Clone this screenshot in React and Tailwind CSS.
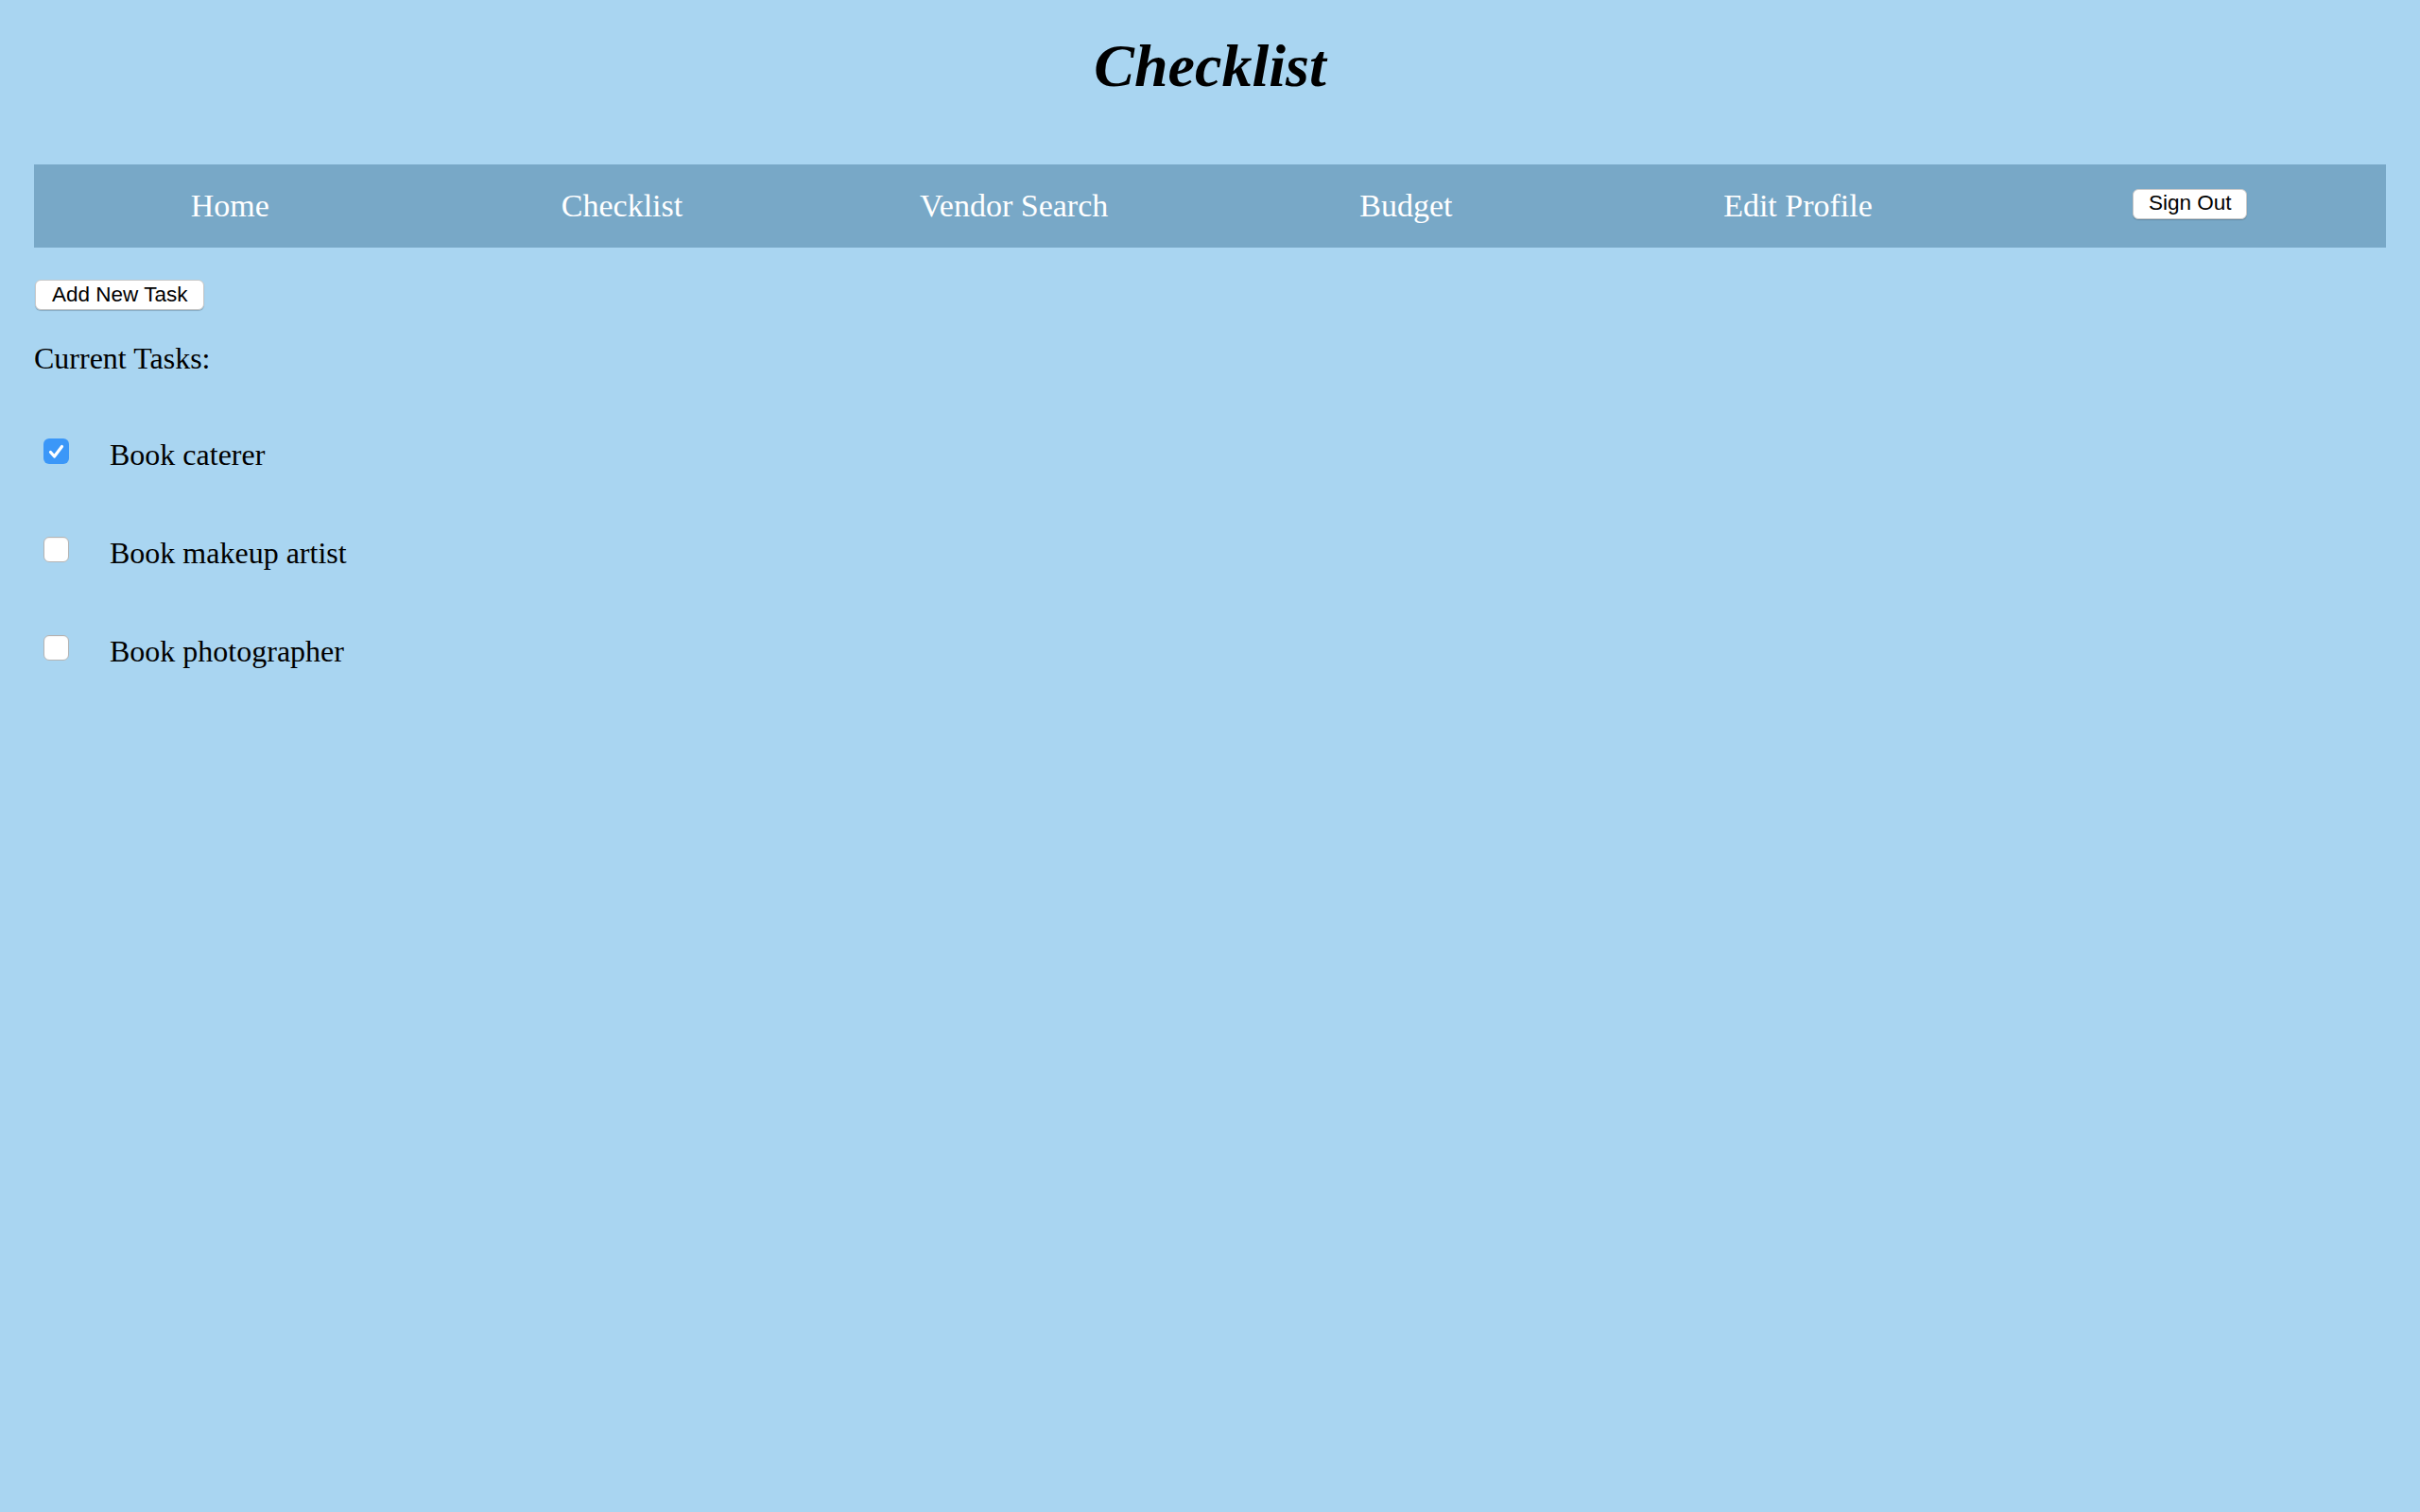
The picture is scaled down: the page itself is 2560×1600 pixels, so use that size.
import React from "react";

const serif = { fontFamily: '"Liberation Serif", "Times New Roman", serif' };
const sans = { fontFamily: '"Liberation Sans", Arial, Helvetica, sans-serif' };

function Box({ checked }) {
  if (checked) {
    return (
      <div className="w-[27px] h-[27px] rounded-[6px] bg-[#3b97f8] flex items-center justify-center shrink-0">
        <svg width="27" height="27" viewBox="0 0 27 27">
          <polyline
            points="7.5,14.5 11.5,19 19.5,8.5"
            fill="none"
            stroke="white"
            strokeWidth="3.2"
            strokeLinecap="round"
            strokeLinejoin="round"
          />
        </svg>
      </div>
    );
  }
  return (
    <div className="w-[27px] h-[27px] rounded-[6px] bg-white border border-[#b4b4b4] shrink-0 shadow-[inset_0_1px_1px_rgba(0,0,0,0.05)]" />
  );
}

function Btn({ children, className = "" }) {
  return (
    <button
      style={sans}
      className={
        "h-[32px] flex items-center justify-center bg-white text-black text-[22.5px] leading-none rounded-[6px] border border-[#c9c9c9] shadow-[0_1px_1px_rgba(0,0,0,0.2)] " +
        className
      }
    >
      {children}
    </button>
  );
}

export default function App() {
  const navItems = ["Home", "Checklist", "Vendor Search", "Budget", "Edit Profile"];
  const tasks = [
    { label: "Book caterer", checked: true },
    { label: "Book makeup artist", checked: false },
    { label: "Book photographer", checked: false },
  ];
  return (
    <div className="min-h-screen bg-[#a9d5f1] px-[36px] pt-[38px]" style={serif}>
      <h1 className="text-center text-[64px] leading-[64px] font-bold italic text-black" style={serif}>
        Checklist
      </h1>

      <nav className="mt-[72px] h-[88px] bg-[#78a8c7] grid grid-cols-6">
        {navItems.map((n) => (
          <div key={n} className="flex items-center justify-center text-white text-[34px] leading-[88px]" style={serif}>
            {n}
          </div>
        ))}
        <div className="flex items-center justify-center">
          <Btn className="mb-[5px] px-[16px]">Sign Out</Btn>
        </div>
      </nav>

      <div className="mt-[34px] ml-px flex">
        <Btn className="px-[17px]">Add New Task</Btn>
      </div>

      <div className="mt-[33px] text-[32px] leading-[36px] text-black">Current Tasks:</div>

      <div className="mt-[66px] flex flex-col gap-[68px]">
        {tasks.map((t) => (
          <div key={t.label} className="flex items-start h-[36px]">
            <div className="ml-[10px] mt-px">
              <Box checked={t.checked} />
            </div>
            <span className="ml-[43px] text-[32px] leading-[36px] text-black">{t.label}</span>
          </div>
        ))}
      </div>
    </div>
  );
}
